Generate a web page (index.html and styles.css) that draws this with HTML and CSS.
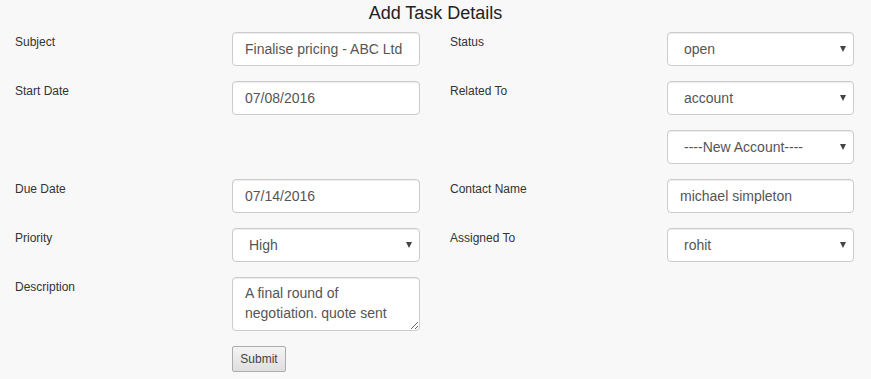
FILE: index.html
```
<!DOCTYPE html>
<html lang="en">
<head>
    <meta charset="UTF-8">
    <title>Add Task Details</title>
    <link rel="stylesheet" href="styles.css">
</head>
<body>

    <h3 class="page-title">Add Task Details</h3>

    <form class="task-form">
        <div class="form-row">
            <div class="field">
                <label>Subject</label>
                <input class="form-control" type="text" value="Finalise pricing - ABC Ltd">
            </div>
            <div class="field">
                <label>Status</label>
                <div class="select-wrap">
                    <select class="form-control"><option>open</option></select>
                </div>
            </div>
        </div>

        <div class="form-row">
            <div class="field">
                <label>Start Date</label>
                <input class="form-control" type="text" value="07/08/2016">
            </div>
            <div class="field">
                <label>Related To</label>
                <div class="select-wrap">
                    <select class="form-control"><option>account</option></select>
                </div>
            </div>
        </div>

        <div class="form-row">
            <div class="field"></div>
            <div class="field">
                <label></label>
                <div class="select-wrap">
                    <select class="form-control"><option>----New Account----</option></select>
                </div>
            </div>
        </div>

        <div class="form-row">
            <div class="field">
                <label>Due Date</label>
                <input class="form-control" type="text" value="07/14/2016">
            </div>
            <div class="field">
                <label>Contact Name</label>
                <input class="form-control" type="text" value="michael simpleton">
            </div>
        </div>

        <div class="form-row">
            <div class="field">
                <label>Priority</label>
                <div class="select-wrap">
                    <select class="form-control"><option>High</option></select>
                </div>
            </div>
            <div class="field">
                <label>Assigned To</label>
                <div class="select-wrap">
                    <select class="form-control"><option>rohit</option></select>
                </div>
            </div>
        </div>

        <div class="form-row">
            <div class="field">
                <label>Description</label>
                <textarea class="form-control description">A final round of negotiation. quote sent</textarea>
            </div>
            <div class="field"></div>
        </div>

        <div class="form-row">
            <div class="field">
                <label></label>
                <button type="button" class="submit-btn">Submit</button>
            </div>
        </div>
    </form>

</body>
</html>
```

FILE: styles.css
```
body {
    font-family: 'Liberation Sans', Arial, sans-serif;
    margin: 0;
    padding: 0;
    background-color: #f8f8f8;
    color: #333;
}

.page-title {
    margin: 0;
    height: 26px;
    line-height: 26px;
    font-size: 18px;
    font-weight: normal;
    text-align: center;
    color: #222;
}

.task-form {
    display: flex;
    flex-direction: column;
    gap: 15px;
    padding-top: 6px;
}

.form-row {
    display: grid;
    grid-template-columns: 435px 436px;
}

.field {
    display: flex;
    align-items: flex-start;
}

.field label {
    box-sizing: border-box;
    width: 232px;
    flex-shrink: 0;
    padding-left: 15px;
    padding-top: 2px;
    font-size: 12px;
    line-height: 17px;
    color: #333;
}

.form-control {
    box-sizing: border-box;
    width: 188px;
    height: 34px;
    margin: 0;
    padding: 0 12px;
    font-family: inherit;
    font-size: 14px;
    color: #555;
    background-color: #fff;
    border: 1px solid #ccc;
    border-radius: 4px;
    box-shadow: inset 0 1px 1px rgba(0, 0, 0, 0.075);
    outline: none;
}

.select-wrap {
    position: relative;
    width: 187px;
}

.select-wrap select {
    width: 187px;
    appearance: none;
    -webkit-appearance: none;
    padding-left: 16px;
}

.select-wrap::after {
    content: "";
    position: absolute;
    right: 8px;
    top: 14px;
    border-left: 3px solid transparent;
    border-right: 3px solid transparent;
    border-top: 6px solid #444;
    pointer-events: none;
}

.field:first-child .select-wrap,
.field:first-child .select-wrap select {
    width: 188px;
}

.field:last-child > .form-control {
    width: 187px;
}

.description {
    height: 54px;
    padding: 5px 12px;
    line-height: 20px;
    resize: vertical;
    overflow: hidden;
}

.submit-btn {
    width: 54px;
    height: 26px;
    padding: 0;
    font-family: inherit;
    font-size: 12px;
    color: #444;
    background: linear-gradient(#f4f4f4, #dedede);
    border: 1px solid #acacac;
    border-radius: 2px;
}
```
